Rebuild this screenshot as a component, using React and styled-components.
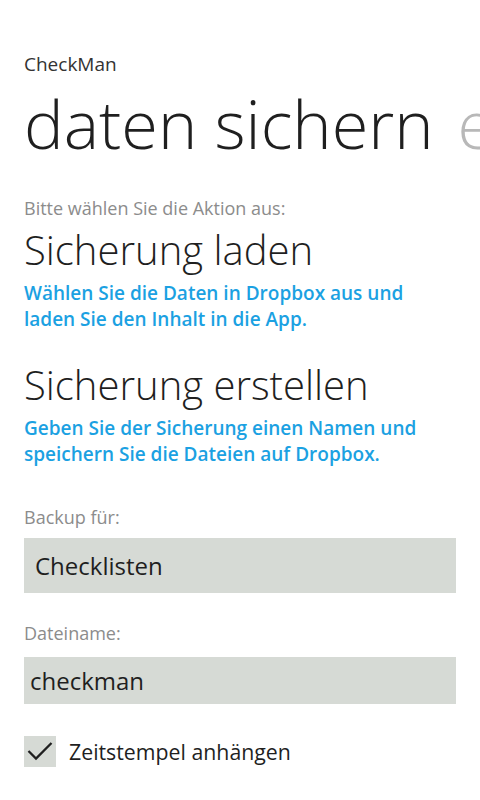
import styled, { createGlobalStyle } from 'styled-components'

const GlobalStyle = createGlobalStyle`
  html, body {
    margin: 0;
    padding: 0;
    background: #ffffff;
  }
  body {
    font-family: "Open Sans", "Noto Sans", "Liberation Sans", sans-serif;
    color: #1f1f1f;
  }
`

const Page = styled.div`
  width: 480px;
  height: 800px;
  box-sizing: border-box;
  padding: 52px 0 0 24px;
  overflow: hidden;
`

const AppTitle = styled.div`
  font-size: 19px;
  line-height: 24px;
  color: #333333;
`

const PivotHeader = styled.div`
  display: flex;
  gap: 24px;
  white-space: nowrap;
  margin-top: 8px;
`

const PivotItem = styled.span`
  font-size: 66.67px;
  font-weight: 300;
  line-height: 80px;
  color: ${({ $active }) => ($active ? '#1f1f1f' : '#b8b8b8')};
`

const Content = styled.div`
  margin-top: 32px;
  width: 432px;
`

const Hint = styled.div`
  font-size: 18px;
  line-height: 24px;
  color: #8c8c8c;
`

const ActionTitle = styled.div`
  margin-top: ${({ $gap }) => $gap}px;
  font-size: 40px;
  font-weight: 300;
  line-height: 48px;
  color: #1f1f1f;
`

const ActionText = styled.div`
  margin-top: 6px;
  font-size: 19px;
  font-weight: 600;
  line-height: 26px;
  color: #1ba1e2;
`

const FieldLabel = styled.div`
  margin-top: ${({ $gap }) => $gap}px;
  font-size: 18px;
  line-height: 24px;
  color: #8c8c8c;
`

const Field = styled.div`
  margin-top: ${({ $gap }) => $gap}px;
  display: flex;
  align-items: center;
  box-sizing: border-box;
  height: ${({ $height }) => $height}px;
  padding-left: ${({ $indent }) => $indent}px;
  background: #d6dad5;
  font-size: 24px;
  color: #1f1f1f;
`

const CheckRow = styled.label`
  margin-top: 32px;
  display: flex;
  align-items: center;
  gap: 13px;
  font-size: 21.3px;
  color: #1f1f1f;
`

const CheckBox = styled.span`
  display: block;
  width: 32px;
  height: 31px;
  background: #d6dad5;
`

const CheckMark = () => (
  <svg width="32" height="31" viewBox="0 0 32 31">
    <path
      d="M4.5 15 L12 22.5 L27.5 7"
      fill="none"
      stroke="#1f1f1f"
      strokeWidth="2.3"
    />
  </svg>
)

export default function App() {
  return (
    <Page>
      <GlobalStyle />
      <AppTitle>CheckMan</AppTitle>
      <PivotHeader>
        <PivotItem $active>daten sichern</PivotItem>
        <PivotItem>einstellungen</PivotItem>
      </PivotHeader>
      <Content>
        <Hint>Bitte wählen Sie die Aktion aus:</Hint>
        <ActionTitle $gap={6}>Sicherung laden</ActionTitle>
        <ActionText>
          Wählen Sie die Daten in Dropbox aus und
          <br />
          laden Sie den Inhalt in die App.
        </ActionText>
        <ActionTitle $gap={29}>Sicherung erstellen</ActionTitle>
        <ActionText>
          Geben Sie der Sicherung einen Namen und
          <br />
          speichern Sie die Dateien auf Dropbox.
        </ActionText>
        <FieldLabel $gap={38}>Backup für:</FieldLabel>
        <Field $gap={9} $height={55} $indent={11}>
          Checklisten
        </Field>
        <FieldLabel $gap={28}>Dateiname:</FieldLabel>
        <Field $gap={12} $height={47} $indent={6}>
          checkman
        </Field>
        <CheckRow>
          <CheckBox>
            <CheckMark />
          </CheckBox>
          Zeitstempel anhängen
        </CheckRow>
      </Content>
    </Page>
  )
}
